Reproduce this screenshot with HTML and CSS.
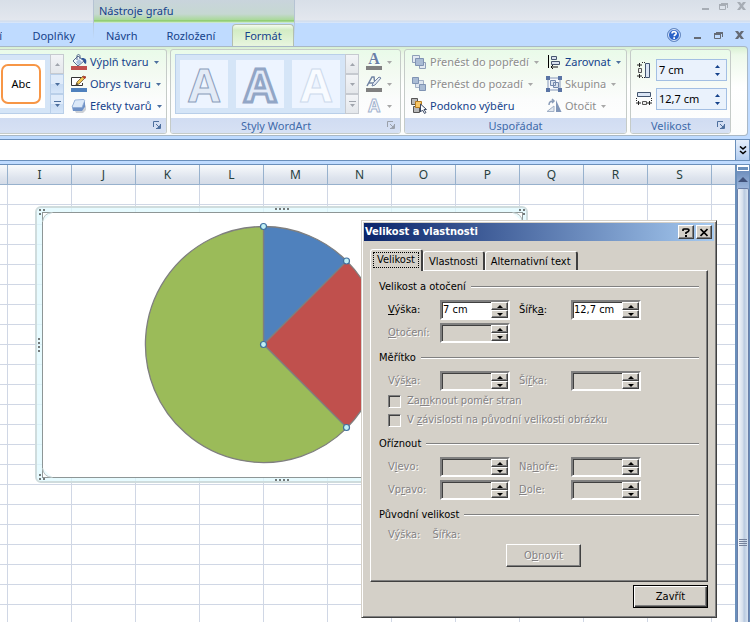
FILE: index.html
```html
<!DOCTYPE html>
<html lang="cs">
<head>
<meta charset="utf-8">
<title>Velikost a vlastnosti</title>
<link rel="stylesheet" href="styles.css">
</head>
<body>
<svg class="defs" aria-hidden="true">
  <symbol id="down" viewBox="0 0 5 3"><path d="M0 0h5L2.500 3z" fill="currentColor"/></symbol>
  <symbol id="up" viewBox="0 0 5 3"><path d="M0 3h5L2.500 0z" fill="currentColor"/></symbol>
  <symbol id="more" viewBox="0 0 7 6"><path d="M0 0h7v1H0zM1 3h5L3.500 6z" fill="currentColor"/></symbol>
  <symbol id="launch" viewBox="0 0 8 8"><path d="M.5 6V.5H6" fill="none" stroke="currentColor"/><path d="M3 3l3 3M7.500 3v4.500H3" fill="none" stroke="currentColor"/><path d="M7 4v3H4z" fill="currentColor"/></symbol>
  <symbol id="win-min" viewBox="0 0 9 8"><path d="M1 6h7v2H1z" fill="currentColor"/></symbol>
  <symbol id="win-restore" viewBox="0 0 9 8"><path d="M2 1h7v5H8V3H2z" fill="currentColor"/><path d="M.5 3v4.500h6V3" fill="none" stroke="currentColor"/><path d="M0 2h7v2H0z" fill="currentColor"/></symbol>
  <symbol id="win-close" viewBox="0 0 9 8"><path d="M0 0h3l1.500 2L6 0h3L6 4l3 4H6L4.500 6 3 8H0l3-4z" fill="currentColor"/></symbol>
</svg>

<div class="app">
  <header class="top">
    <div class="title-left"></div>
    <div class="title-context">Nástroje grafu</div>
    <div class="title-right">
      <button class="win" aria-label="Minimalizovat"><svg><use href="#win-min"/></svg></button>
      <button class="win" aria-label="Obnovit okno"><svg><use href="#win-restore"/></svg></button>
      <button class="win" aria-label="Zavřít okno"><svg><use href="#win-close"/></svg></button>
    </div>
    <nav class="tabs tabs-main"><a class="tab tab-cut" href="#">í</a><a class="tab" href="#">Doplňky</a></nav>
    <nav class="tabs tabs-context">
      <a class="tab" href="#">Návrh</a><a class="tab" href="#">Rozložení</a><a class="tab active" href="#">Formát</a>
    </nav>
    <div class="tabs tabs-right">
      <button class="win help" aria-label="Nápověda"><svg viewBox="0 0 14 14"><circle cx="7" cy="7" r="6.500" fill="#2a62c8" stroke="#6a8cc0"/><circle cx="7" cy="7" r="5.500" fill="none" stroke="#dce9fb"/><path d="M5 5.500C5 3 9.200 3 9.200 5.400 9.200 6.800 7.200 6.700 7.200 8.300" fill="none" stroke="#fff" stroke-width="1.600"/><path d="M6.300 9.300h1.700v1.600H6.300z" fill="#fff"/></svg></button>
      <button class="win" aria-label="Minimalizovat sešit"><svg><use href="#win-min"/></svg></button>
      <button class="win" aria-label="Obnovit sešit"><svg><use href="#win-restore"/></svg></button>
      <button class="win" aria-label="Zavřít sešit"><svg><use href="#win-close"/></svg></button>
    </div>
  </header>

  <div class="ribbon">
    <section class="group group-shape">
      <div class="group-body">
        <div class="gallery">
          <button class="swatch shape-swatch"><span>Abc</span></button>
          <div class="scroller">
            <button class="dim" aria-label="Předchozí styl"><svg class="arrow"><use href="#up"/></svg></button>
            <button aria-label="Další styl"><svg class="arrow"><use href="#down"/></svg></button>
            <button aria-label="Všechny styly"><svg class="more"><use href="#more"/></svg></button>
          </div>
        </div>
        <div class="cmds">
          <button class="cmd"><svg class="icon" viewBox="0 0 16 16"><path d="M2 7l5-5 6 5-6 5z" fill="#f4f8fc" stroke="#54698c"/><path d="M6 6V2c0-2 3-2 3 0v3" fill="none" stroke="#54698c"/><path d="M5 8l3-3 3 3-4 3z" fill="#a9c1de"/><path d="M11 4c4 0 5 2 4 6l-2-1c0-2 0-3-3-4z" fill="#2f5699"/><path d="M0 12h16v4H0z" fill="#c0504d"/></svg>Výplň tvaru<svg class="arrow"><use href="#down"/></svg></button>
          <button class="cmd"><svg class="icon" viewBox="0 0 16 16"><path d="M10 1.500H.500v8h11V7" fill="#fff" stroke="#333"/><path d="M5 9l1-3 6-6 3 1-7 7z" fill="#f0c64f" stroke="#6c5630" stroke-width=".8"/><path d="M11 1l2-1 2 1-1 2z" fill="#b83b35"/><path d="M5 9l1-2 1 1z" fill="#222"/><path d="M0 12h16v4H0z" fill="#4f81bd"/></svg>Obrys tvaru<svg class="arrow"><use href="#down"/></svg></button>
          <button class="cmd"><svg class="icon" viewBox="0 0 16 16"><path d="M4 13l9-2 2-5v6l-3 3H5z" fill="#ccd0d6"/><path d="M1 9l3-7h9l1 2v5l-3 4H2z" fill="#6f91c6"/><path d="M1 9l3-7 8-.5c2 0 2 1 1 3l-2 5H2z" fill="#dbe8f8" stroke="#8ca9d4" stroke-width=".8"/></svg>Efekty tvarů<svg class="arrow"><use href="#down"/></svg></button>
        </div>
      </div>
      <div class="group-label"><button class="launch" aria-label="Styly tvaru"><svg><use href="#launch"/></svg></button></div>
    </section>

    <section class="group group-wordart">
      <div class="group-body">
        <div class="gallery">
          <button class="swatch"><svg viewBox="0 0 48 48"><text class="art art-thin" x="24" y="42">A</text></svg></button>
          <button class="swatch"><svg viewBox="0 0 48 48"><text class="art art-thick" x="24" y="42">A</text></svg></button>
          <button class="swatch"><svg viewBox="0 0 48 48"><text class="art art-pale" x="24" y="42">A</text></svg></button>
          <div class="scroller gray">
            <button aria-label="Předchozí"><svg class="arrow"><use href="#up"/></svg></button>
            <button aria-label="Další"><svg class="arrow"><use href="#down"/></svg></button>
            <button aria-label="Více"><svg class="more"><use href="#more"/></svg></button>
          </div>
        </div>
        <div class="cmds">
          <button class="cmd off" aria-label="Výplň textu"><svg class="icon" viewBox="0 0 16 16"><text class="serif-a" x="8" y="10">A</text><path d="M0 12h16v4H0z" fill="#808080"/></svg><svg class="arrow"><use href="#down"/></svg></button>
          <button class="cmd off" aria-label="Obrys textu"><svg class="icon" viewBox="0 0 16 16"><path d="M1 10L6 1h2l1 8M3 7h5" fill="none" stroke="#7184a4" stroke-width="1.500"/><path d="M6 10l1-3 6-6 2 1-6 7z" fill="#e4eaf3" stroke="#7184a4"/><path d="M0 12h16v4H0z" fill="#808080"/></svg><svg class="arrow"><use href="#down"/></svg></button>
          <button class="cmd off" aria-label="Textové efekty"><svg class="icon" viewBox="0 0 16 16"><text class="glow-a" x="8" y="14">A</text></svg><svg class="arrow"><use href="#down"/></svg></button>
        </div>
      </div>
      <div class="group-label has-launch">Styly WordArt<button class="launch dim" aria-label="Formát textu"><svg><use href="#launch"/></svg></button></div>
    </section>

    <section class="group group-arrange">
      <div class="group-body">
        <div class="cmds">
          <button class="cmd off"><svg class="icon" viewBox="0 0 16 16"><path d="M1.500 1.500h7v7h-7zM8.500 8.500h6v6h-6z" fill="#e2e9f2" stroke="#8f9fb8"/><path d="M4.500 4.500h8v7h-8z" fill="#a9bbd4" stroke="#7f93b3"/></svg>Přenést do popředí<svg class="arrow"><use href="#down"/></svg></button>
          <button class="cmd off"><svg class="icon" viewBox="0 0 16 16"><path d="M4.500 4.500h8v7h-8z" fill="#dfe6ef" stroke="#a3b1c6"/><path d="M1.500 1.500h6v6h-6zM8.500 8.500h6v6h-6z" fill="#a9bbd4" stroke="#7f93b3"/></svg>Přenést do pozadí<svg class="arrow"><use href="#down"/></svg></button>
          <button class="cmd"><svg class="icon" viewBox="0 0 16 16"><path d="M.5.500h6v6h-6zM2.500 8.500h6v6h-6z" fill="#b8b8b8" stroke="#555"/><path d="M4.500 3.500h6v6h-6z" fill="#f8c766" stroke="#b57b20"/><path d="M9.500 6v8l2-2 2 3.500 1.500-1-2-3h2.500z" fill="#fff" stroke="#3c4a66"/></svg>Podokno výběru</button>
        </div>
        <div class="cmds">
          <button class="cmd"><svg class="icon" viewBox="0 0 16 16"><path d="M2 1h1v13H2z" fill="#000"/><path d="M5.500 2.500h5v3h-5zM5.500 7.500h8v3h-8z" fill="#d9e2ee" stroke="#47566f"/><path d="M5 13h7M7 11l-2 2 2 2" fill="none" stroke="#111"/></svg>Zarovnat<svg class="arrow"><use href="#down"/></svg></button>
          <button class="cmd off"><svg class="icon" viewBox="0 0 16 16"><path d="M2 2h12v12H2z" fill="#f4f7fb" stroke="#8698b8"/><path d="M4.500 4.500h5v5h-5zM7.500 6.500h5v5h-5z" fill="#dce4ef" stroke="#7388ad"/><path d="M0 0h4v4H0zM12 0h4v4h-4zM0 12h4v4H0zM12 12h4v4h-4z" fill="#5a74a4"/></svg>Skupina<svg class="arrow"><use href="#down"/></svg></button>
          <button class="cmd off"><svg class="icon" viewBox="0 0 16 16"><path d="M1 13.500L8 8v5.500z" fill="#e2e8f0" stroke="#a1b0c6"/><path d="M10 2l5.500 12H10z" fill="#8196b8"/><path d="M3 7c0-3 2-4 4-4M6 1l2 2-2 2" fill="none" stroke="#8a9cb8" stroke-width="1.500"/></svg>Otočit<svg class="arrow"><use href="#down"/></svg></button>
        </div>
      </div>
      <div class="group-label">Uspořádat</div>
    </section>

    <section class="group group-size">
      <div class="group-body sizes">
        <div class="size-row">
          <label for="r-height" aria-label="Výška"><svg class="icon" viewBox="0 0 16 16"><path d="M9.500 1.500h4v14h-4z" fill="#dbe6f5" stroke="#42546f"/><path d="M2.500 6.500h3v4h-3z" fill="#eee" stroke="#555"/><path d="M1 3h5M3.500 1v4M1 14h5M3.500 12v4" stroke="#222"/><path d="M6 .5h3M6 15.500h3" stroke="#222" stroke-dasharray="1 1"/></svg></label>
          <span class="ribbon-spin"><input id="r-height" value="7 cm"><span class="steps"><button aria-label="Zvýšit výšku"><svg class="arrow"><use href="#up"/></svg></button><button aria-label="Snížit výšku"><svg class="arrow"><use href="#down"/></svg></button></span></span>
        </div>
        <div class="size-row">
          <label for="r-width" aria-label="Šířka"><svg class="icon" viewBox="0 0 16 16"><path d="M1.500 1.500h13v4h-13z" fill="#dbe6f5" stroke="#42546f"/><path d="M6.500 10.500h4v3h-4z" fill="#eee" stroke="#555"/><path d="M0 12h5M2.500 10v4M11 12h5M13.500 10v4" stroke="#222"/><path d="M.5 7v3M15.500 7v3" stroke="#222" stroke-dasharray="1 1"/></svg></label>
          <span class="ribbon-spin"><input id="r-width" value="12,7 cm"><span class="steps"><button aria-label="Zvýšit šířku"><svg class="arrow"><use href="#up"/></svg></button><button aria-label="Snížit šířku"><svg class="arrow"><use href="#down"/></svg></button></span></span>
        </div>
      </div>
      <div class="group-label has-launch">Velikost<button class="launch" aria-label="Velikost a vlastnosti"><svg><use href="#launch"/></svg></button></div>
    </section>
  </div>

  <div class="formula-bar">
    <input class="formula" aria-label="Řádek vzorců">
    <button class="expand" aria-label="Rozbalit řádek vzorců"><svg viewBox="0 0 8 9"><path d="M1 .5L4 3 7 .500M1 5l3 2.500L7 5" fill="none" stroke="#000" stroke-width="1.600"/></svg></button>
  </div>

  <main class="workbook">
    <div class="sheet">
      <div class="col-heads"><span></span><span>I</span><span>J</span><span>K</span><span>L</span><span>M</span><span>N</span><span>O</span><span>P</span><span>Q</span><span>R</span><span>S</span><span></span></div>
      <div class="cells"></div>

      <svg class="chart" viewBox="0 0 493 277" aria-label="Výsečový graf">
        <rect x="1" y="1" width="491" height="275" rx="5" fill="#dffaff" fill-opacity=".75" stroke="#cfdcdd" stroke-width="2"/>
        <rect x="7.500" y="6.500" width="480" height="265" fill="#fff" stroke="#8e9696"/>
        <path d="M7.500 16q1-9 10-9.500M487.500 16q-1-9-10-9.500M7.500 262q1 9 10 9.500" fill="#eefcfe" stroke="#b5c0c0"/>
        <g stroke="#7f7f7f" stroke-width="1.300">
          <path d="M228.500 138.500V20.500A118 118 0 0 1 311.900 55.100z" fill="#4f81bd"/>
          <path d="M228.500 138.500L311.900 55.100A118 118 0 0 1 311.900 221.900z" fill="#c0504d"/>
          <path d="M228.500 138.500L311.900 221.900A118 118 0 1 1 228.500 20.500z" fill="#9bbb59"/>
        </g>
        <g fill="#bff0f5" stroke="#3f6f9f" stroke-width="1.200">
          <circle cx="228.500" cy="20.500" r="3"/><circle cx="311.500" cy="55" r="3"/><circle cx="228.500" cy="138.500" r="3"/><circle cx="311.500" cy="221.500" r="3"/>
        </g>
        <path d="M240 2h2v2h-2zm4 0h2v2h-2zm4 0h2v2h-2zm4 0h2v2h-2zM240 273h2v2h-2zm4 0h2v2h-2zm4 0h2v2h-2zm4 0h2v2h-2zM3 132h2v2H3zm0 4h2v2H3zm0 4h2v2H3zm0 4h2v2H3zM4 3h2v2H4zm4 0h2v2H8zM4 7h2v2H4zM484 3h2v2h-2zm4 0h2v2h-2zm0 4h2v2h-2zM4 268h2v2H4zm0 4h2v2H4zm4 0h2v2H8z" fill="#747a7a"/>
      </svg>
    </div>
    <div class="vscroll">
      <div class="split"></div>
      <button class="scroll-up" aria-label="Posunout nahoru"><svg viewBox="0 0 10 5"><path d="M0 5h10L5 0z" fill="#40527a"/></svg></button>
      <div class="thumb"><span></span><span></span><span></span><span></span></div>
    </div>
  </main>

  <section class="dialog" role="dialog" aria-labelledby="dlg-title">
    <div class="dlg-title">
      <h1 id="dlg-title">Velikost a vlastnosti</h1>
      <button class="cap" aria-label="Nápověda k dialogu"><svg viewBox="0 0 8 9"><path d="M1 3V2q0-1 1.500-1h3Q7 1 7 2.200T4 4.800V6" fill="none" stroke="#000" stroke-width="1.700"/><path d="M3 7h2v2H3z"/></svg></button>
      <button class="cap" aria-label="Zavřít dialog"><svg viewBox="0 0 8 9"><path d="M.5 1l7 7M7.500 1l-7 7" fill="none" stroke="#000" stroke-width="1.700"/></svg></button>
    </div>
    <div class="dlg-tabs" role="tablist">
      <button class="dlg-tab current" role="tab"><span>Velikost</span></button><button class="dlg-tab" role="tab">Vlastnosti</button><button class="dlg-tab" role="tab">Alternativní text</button>
    </div>
    <div class="panel">
      <section class="block">
        <h2>Velikost a otočení</h2>
        <div class="fields">
          <label for="h1"><u>V</u>ýška:</label>
          <span class="spin"><input id="h1" value="7 cm"><span class="spin-btns"><button aria-label="Více"></button><button class="dn" aria-label="Méně"></button></span></span>
          <label for="w1">Šířk<u>a</u>:</label>
          <span class="spin"><input id="w1" value="12,7 cm"><span class="spin-btns"><button aria-label="Více"></button><button class="dn" aria-label="Méně"></button></span></span>
          <label class="off" for="rot"><u>O</u>točení:</label>
          <span class="spin off"><input id="rot" disabled><span class="spin-btns"><button aria-label="Více"></button><button class="dn" aria-label="Méně"></button></span></span>
        </div>
      </section>
      <section class="block">
        <h2>Měřítko</h2>
        <div class="fields">
          <label class="off" for="h2">Výš<u>k</u>a:</label>
          <span class="spin off"><input id="h2" disabled><span class="spin-btns"><button aria-label="Více"></button><button class="dn" aria-label="Méně"></button></span></span>
          <label class="off" for="w2">Ší<u>ř</u>ka:</label>
          <span class="spin off"><input id="w2" disabled><span class="spin-btns"><button aria-label="Více"></button><button class="dn" aria-label="Méně"></button></span></span>
        </div>
        <label class="check off"><input type="checkbox" disabled><span>Za<u>m</u>knout poměr stran</span></label>
        <label class="check off"><input type="checkbox" disabled><span>V <u>z</u>ávislosti na původní velikosti obrázku</span></label>
      </section>
      <section class="block">
        <h2>Oříznout</h2>
        <div class="fields">
          <label class="off" for="c1">V<u>l</u>evo:</label>
          <span class="spin off"><input id="c1" disabled><span class="spin-btns"><button aria-label="Více"></button><button class="dn" aria-label="Méně"></button></span></span>
          <label class="off" for="c2">Na<u>h</u>oře:</label>
          <span class="spin off"><input id="c2" disabled><span class="spin-btns"><button aria-label="Více"></button><button class="dn" aria-label="Méně"></button></span></span>
          <label class="off" for="c3">Vp<u>r</u>avo:</label>
          <span class="spin off"><input id="c3" disabled><span class="spin-btns"><button aria-label="Více"></button><button class="dn" aria-label="Méně"></button></span></span>
          <label class="off" for="c4"><u>D</u>ole:</label>
          <span class="spin off"><input id="c4" disabled><span class="spin-btns"><button aria-label="Více"></button><button class="dn" aria-label="Méně"></button></span></span>
        </div>
      </section>
      <section class="block">
        <h2>Původní velikost</h2>
        <p class="orig off"><span>Výška:</span><span>Šířka:</span></p>
        <button class="push reset off" disabled>O<u>b</u>novit</button>
      </section>
    </div>
    <div class="dlg-foot"><button class="push default">Zavřít</button></div>
  </section>
</div>
</body>
</html>
```
FILE: styles.css
```css
* { box-sizing: border-box; }

body {
  margin: 0;
  font: 11px/16px "Noto Sans", "Open Sans", sans-serif;
  color: #15428b;
  overflow: hidden;
}

button, input { font: inherit; color: inherit; margin: 0; padding: 0; border: 0; background: none; border-radius: 0; outline: 0; }
a { color: inherit; text-decoration: none; }
svg { display: block; flex: none; }
.defs { position: absolute; width: 0; height: 0; }

.app { position: relative; display: flex; flex-direction: column; min-height: 100vh; background: #bfdbff; }

/* title row and tab row */
.top { display: grid; grid-template-columns: 93px 202px 1fr; grid-template-rows: 23px 23px; }
.title-left, .title-right { background: linear-gradient(#d8dfe8, #e3e7ee 20px, #cfdcec 21px, #dbe9fb); }
.title-context {
  display: flex; align-items: center; padding: 0 5px 2px;
  background: linear-gradient(#c9d4dc, #c6d8d2 14px, #a9d998 20px, #7cc352 21px, #c9e9c9 22px);
  border: solid #b5c3d3; border-width: 0 1px;
}
.title-right { display: flex; justify-content: flex-end; align-items: flex-start; gap: 9px; padding: 2px 4px; color: #a7adb5; }
.win { display: flex; }
.win svg { width: 9px; height: 8px; }
.help svg { width: 14px; height: 14px; }
.tabs { display: flex; align-items: stretch; }
.tabs-main { padding-right: 6px; justify-content: space-between; }
.tabs-context { gap: 5px; padding-left: 1px; background: linear-gradient(#b5c7dc, #bfdbff) no-repeat 0 0 / 1px 16px, linear-gradient(#b5c7dc, #bfdbff) no-repeat 100% 0 / 1px 16px; }
.tabs-right { justify-content: flex-end; align-items: center; gap: 12px; padding-right: 6px; color: #656b75; }
.tab { display: flex; align-items: center; padding: 2px 12px 0; white-space: nowrap; }
.tab-cut { padding: 2px 0 0; width: 2px; overflow: hidden; justify-content: flex-end; }
.tab.active {
  margin-top: 1px; padding: 0 11px; border: 1px solid #b3bfae; border-bottom: 0; border-radius: 4px 4px 0 0;
  background: linear-gradient(#f3fbee, #d3ecc4 5px, #e8f6df);
}

/* ribbon */
.ribbon {
  display: flex; gap: 3px; padding: 2px 0; margin-right: 2px; height: 90px;
  border: solid #a9b8c6; border-width: 1px 1px 1px 0; border-radius: 0 4px 4px 0;
  background: linear-gradient(#d8f0d2, #edf9ea 8px, #fff 40px, #fcfdfc);
}
.group {
  display: flex; flex-direction: column; height: 85px;
  border: 1px solid #c5cbc8; border-radius: 3px; overflow: hidden;
  background: linear-gradient(#e9fbe9, #f2faf0 20px, #fbfcfc 50px, #fff);
}
.group-shape { width: 167px; border-left: 0; border-radius: 0 3px 3px 0; }
.group-wordart { width: 231px; }
.group-arrange { width: 223px; }
.group-size { width: 101px; }
.group-body { display: flex; flex: 1; min-height: 0; padding: 4px 4px 0; }
.group-shape .group-body { padding-left: 0; }
.group-label {
  display: flex; align-items: center; justify-content: center; position: relative; height: 15px; flex: none;
  background: linear-gradient(#d0dcf2, #d7e1f4); color: #3e6aaa;
}
.group-label.has-launch { padding-right: 19px; }
.launch { position: absolute; right: 5px; top: 3px; color: #4d6f9e; }
.launch svg { width: 8px; height: 8px; }
.launch.dim { color: #9aa0aa; }

.gallery { display: flex; height: 60px; padding-left: 4px; gap: 8px; align-items: center; background: #d5e5f7; border: 1px solid #b9cfe9; }
.group-shape .gallery { padding-left: 0; border-left: 0; gap: 6px; }
.swatch { width: 48px; height: 48px; background: #edf4ff; }
.swatch svg { width: 48px; height: 48px; overflow: visible; }
.shape-swatch { width: 45px; background: #fff; padding: 0 4px 0 1px; }
.shape-swatch span { display: flex; align-items: center; justify-content: center; height: 40px; border: 2px solid #f79646; border-radius: 7px; color: #000; background: #fff; }
.scroller { display: flex; flex-direction: column; width: 14px; align-self: stretch; margin: -1px; color: #4d6f9e; }
.group-wordart .scroller { margin-left: -3px; }
.scroller button { flex: 1; display: flex; align-items: center; justify-content: center; border: 1px solid #b9cfe9; background: linear-gradient(#dfebfa 50%, #c8dbf3 50%, #d6e6f9); }
.scroller .dim, .scroller.gray button { background: linear-gradient(#f2f4f7, #e4e7eb); color: #a0a5ad; border-color: #c6cad0; }
.arrow { width: 5px; height: 3px; }
.more { width: 7px; height: 6px; }

.cmds { display: flex; flex-direction: column; justify-content: space-between; padding-left: 7px; height: 62px; margin-top: -1px; }
.cmd { display: flex; align-items: center; gap: 3px; height: 18px; white-space: nowrap; }
.cmd .arrow { margin-left: 2px; color: #4d6f9e; }
.cmd.off { color: #8d8d8d; }
.cmd.off .arrow { color: #a8a8a8; }
.icon { width: 16px; height: 16px; overflow: visible; }
.group-arrange .cmds { padding-left: 2px; }
.group-arrange .cmds:first-child { width: 135px; }

.sizes { flex-direction: column; gap: 7px; padding: 9px 3px 0 5px; }
.size-row { display: flex; align-items: center; justify-content: space-between; }
.ribbon-spin { display: flex; width: 71px; height: 22px; border: 1px solid #a3bfe3; background: #eaf2fc; color: #000; }
.ribbon-spin input { width: 0; flex: 1; padding-left: 2px; }
.steps { display: flex; flex-direction: column; justify-content: space-around; width: 17px; color: #15428b; padding: 2px 0; }
.steps button { display: flex; justify-content: center; }

.art { font: bold 46px "Open Sans", sans-serif; text-anchor: middle; }
.art-thin { fill: #e3ebf6; stroke: #8b9dbd; }
.art-thick { fill: #e3ebf8; stroke: #92a6c6; stroke-width: 3px; }
.art-pale { fill: #f8fbff; stroke: #cddaec; }
.serif-a { font: bold 16px "Liberation Serif", serif; text-anchor: middle; fill: #6a80a6; }
.glow-a { font: bold 17px "Open Sans", sans-serif; text-anchor: middle; fill: #f1f5fb; stroke: #a4b4cf; }

/* formula bar */
.formula-bar { display: flex; margin-top: 3px; height: 22px; border: solid #6a8fbb; border-width: 1px 0; background: #fff; }
.formula { flex: 1; }
.expand { width: 15px; display: flex; align-items: center; justify-content: center; border: solid #6a8fbb; border-width: 0 1px; background: linear-gradient(#e6effb, #b3cdf0); }
.expand svg { width: 8px; height: 9px; }

/* worksheet */
.workbook { flex: 1; display: flex; margin-top: 3px; border-top: 1px solid #6a8fbb; background: #fff; }
.sheet { flex: 1; min-width: 0; position: relative; display: flex; flex-direction: column; overflow: hidden; }
.col-heads { display: flex; height: 20px; flex: none; background: linear-gradient(#f8fafc, #dfe5ee 12px, #d4dbe7); border-bottom: 1px solid #97b1cd; }
.col-heads span { width: 64px; flex: none; border-right: 1px solid #97b1cd; text-align: center; font-size: 12px; line-height: 20px; color: #27413e; }
.col-heads span:first-child { width: 8px; }
.col-heads span:last-child { flex: 1; border-right: 0; }
.cells {
  flex: 1;
  background:
    repeating-linear-gradient(90deg, #d0d7e5 0 1px, transparent 1px 64px) 7px 0,
    repeating-linear-gradient(transparent 0 19px, #d0d7e5 19px 20px);
}
.chart { position: absolute; left: 35px; top: 41px; width: 493px; height: 277px; }

.vscroll { width: 15px; display: flex; flex-direction: column; border: solid #6a8fbb; border-width: 0 1px 0 2px; background: #b9cbe2; }
.split { height: 6px; border: 1px solid #fff; border-top-width: 2px; background: #6a8fbb; }
.scroll-up { display: flex; align-items: center; justify-content: center; height: 17px; background: linear-gradient(#6f8fbd, #9ab4da); }
.scroll-up svg { width: 10px; height: 5px; }
.thumb { flex: 1; display: flex; flex-direction: column; gap: 1px; align-items: center; padding-top: 350px; border: 1px solid #6a7fa8; border-bottom: 0; border-radius: 2px 2px 0 0; background: linear-gradient(90deg, #f4f7fb, #d4deeb 50%, #b8c9df 60%, #d8e3f0); }
.thumb span { width: 8px; height: 1px; background: #75829c; }

/* dialog */
.dialog {
  position: absolute; left: 361px; top: 220px; width: 356px; padding: 2px;
  background: #d4d0c8; color: #000; font: 11px/14px "DejaVu Sans Condensed", "DejaVu Sans", sans-serif;
  border: 1px solid; border-color: #d4d0c8 #404040 #404040 #d4d0c8;
  box-shadow: inset 1px 1px #fff, inset -1px -1px #808080;
}
.dlg-title { display: flex; align-items: center; gap: 2px; height: 18px; padding: 0 2px 0 1px; background: linear-gradient(90deg, #0a246a, #a6caf0); color: #fff; }
.dlg-title h1 { flex: 1; margin: 0; font-size: 11px; font-weight: bold; }
.cap, .push, .spin-btns button { background: #d4d0c8; border: 1px solid; border-color: #fff #404040 #404040 #fff; box-shadow: inset -1px -1px #808080; }
.cap { width: 16px; height: 14px; display: flex; align-items: center; justify-content: center; }
.cap svg { width: 8px; height: 9px; }
.dlg-tabs { display: flex; align-items: flex-end; height: 29px; padding: 8px 6px 0; }
.dlg-tab { height: 19px; padding: 1px 5px 0; background: #d4d0c8; border: solid; border-width: 1px 2px 0 1px; border-color: #fff #404040 #fff #fff; border-radius: 3px 3px 0 0; white-space: nowrap; }
.dlg-tab.current { height: 22px; padding: 0 2px 2px; position: relative; margin-bottom: -1px; }
.dlg-tab.current span { display: block; padding: 0 3px; border: 1px dotted #000; }
.panel { margin: 0 6px; padding: 8px 8px 14px; border: 1px solid; border-color: #fff #404040 #404040 #fff; box-shadow: inset -1px -1px #808080; }
.block { display: flex; flex-direction: column; gap: 1px; margin-bottom: 7px; }
.block:last-child { margin-bottom: 0; }
.block h2 { display: flex; align-items: center; gap: 5px; margin: 0 0 4px; height: 16px; font-size: 11px; font-weight: normal; }
.block h2::after { content: ""; flex: 1; height: 2px; background: linear-gradient(#808080 50%, #fff 50%); }
.fields { display: grid; grid-template-columns: 52px 70px 61px 70px; row-gap: 3px; padding-left: 9px; align-items: center; }
.fields label:nth-of-type(even) { padding-left: 9px; }
.off { color: #848284; text-shadow: 1px 1px #fff; }
.spin { display: flex; height: 20px; background: #fff; border: 2px solid; border-color: #808080 #fff #fff #808080; box-shadow: inset 1px 1px #404040; }
.spin.off { background: #d4d0c8; }
.spin input { width: 0; flex: 1; padding-left: 1px; }
.spin-btns { display: flex; flex-direction: column; width: 17px; }
.spin-btns button { flex: 1; display: flex; align-items: center; justify-content: center; }
.spin-btns button::after { content: ""; border: solid transparent; border-width: 0 3px 3px; border-bottom-color: #000; }
.spin-btns .dn::after { border-width: 3px 3px 0; border-top-color: #000; }
.check { display: flex; align-items: center; gap: 6px; height: 18px; padding-left: 9px; }
.check input { appearance: none; width: 13px; height: 13px; border: 1px solid; border-color: #808080 #fff #fff #808080; box-shadow: inset 1px 1px #404040; }
.orig { display: flex; gap: 12px; margin: -1px 0 0; padding-left: 9px; height: 16px; align-items: center; }
.push { width: 75px; height: 23px; }
.reset { align-self: center; margin-left: 9px; }
.push.default { border-color: #000; box-shadow: inset 1px 1px #fff, inset -1px -1px #404040, inset -2px -2px #808080; }
.dlg-foot { display: flex; justify-content: flex-end; padding: 3px 6px 7px; }
```
